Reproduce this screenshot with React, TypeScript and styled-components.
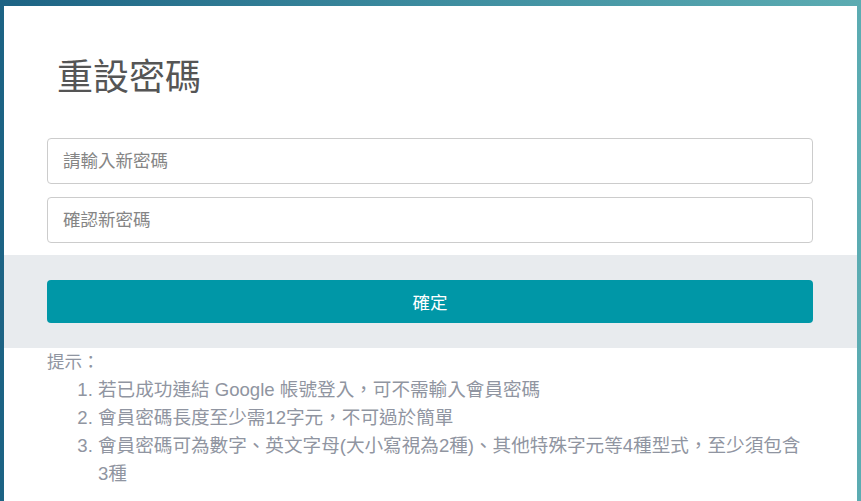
import styled, { createGlobalStyle } from 'styled-components'

const GlobalStyle = createGlobalStyle`
    html, body {
        margin: 0;
        padding: 0;
        height: 100%;
    }
    body {
        background: linear-gradient(90deg, #1d6384 0%, #3d8c9f 50%, #5cacb2 100%);
        font-family: "Liberation Sans", "Noto Sans CJK TC", sans-serif;
        overflow: hidden;
    }
`

const StyledPage = styled.div`
    padding: 6px 4px 0 4px;
    min-height: 100vh;
    box-sizing: border-box;
`

const StyledCard = styled.div`
    background: #ffffff;
    min-height: 520px;
`

const StyledTitle = styled.h2`
    margin: 0;
    padding: 50px 43px 38px 53px;
    font-size: 36px;
    font-weight: 400;
    line-height: 44px;
    color: #555555;
`

const StyledForm = styled.div`
    display: flex;
    flex-direction: column;
    gap: 13px;
    padding: 0 44px 12px 43px;
`

const StyledInput = styled.input`
    display: block;
    box-sizing: border-box;
    width: 100%;
    height: 46px;
    padding: 0 15px;
    border: 1px solid #cccccc;
    border-radius: 4px;
    font-family: inherit;
    font-size: 17.5px;
    color: #555555;
    outline: none;

    &::placeholder {
        color: #858585;
    }
`

const StyledActions = styled.div`
    background: #e8ebee;
    padding: 25px 44px 25px 43px;
`

const StyledButton = styled.button`
    display: block;
    width: 100%;
    height: 43px;
    border: none;
    border-radius: 4px;
    background: #0097a7;
    color: #ffffff;
    font-family: inherit;
    font-size: 17.5px;
    cursor: pointer;
`

const StyledHints = styled.div`
    padding: 0 44px 0 43px;
    color: #9095a1;
    font-size: 17.5px;
    line-height: 28px;
`

const StyledHintList = styled.ol`
    margin: 0;
    padding-left: 51px;
    font-size: 18.6px;
`

// \u2060 keeps "3種" together when the last line wraps
const hints = [
    '若已成功連結 Google 帳號登入，可不需輸入會員密碼',
    '會員密碼長度至少需12字元，不可過於簡單',
    '會員密碼可為數字、英文字母(大小寫視為2種)、其他特殊字元等4種型式，至少須包含3\u2060種',
]

const App = () => {
    return (
        <>
            <GlobalStyle />
            <StyledPage>
                <StyledCard>
                    <StyledTitle>重設密碼</StyledTitle>
                    <StyledForm>
                        <StyledInput type="password" placeholder="請輸入新密碼" />
                        <StyledInput type="password" placeholder="確認新密碼" />
                    </StyledForm>
                    <StyledActions>
                        <StyledButton>確定</StyledButton>
                    </StyledActions>
                    <StyledHints>
                        提示：
                        <StyledHintList>
                            {hints.map((hint) => (
                                <li key={hint}>{hint}</li>
                            ))}
                        </StyledHintList>
                    </StyledHints>
                </StyledCard>
            </StyledPage>
        </>
    )
}

export default App
